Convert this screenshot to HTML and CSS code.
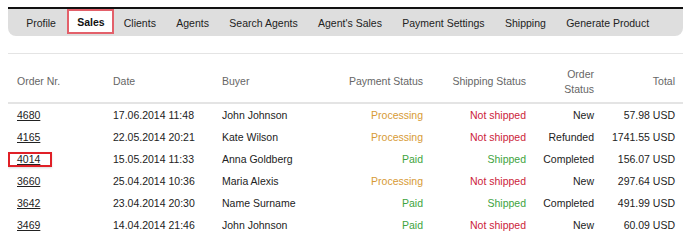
FILE: index.html
```html
<!DOCTYPE html>
<html lang="en">
<head>
    <meta charset="UTF-8">
    <title>Sales</title>
    <link rel="stylesheet" href="styles.css">
</head>
<body>
    <ul class="tabs">
        <li class="tab">Profile</li>
        <li class="tab active">Sales</li>
        <li class="tab">Clients</li>
        <li class="tab">Agents</li>
        <li class="tab">Search Agents</li>
        <li class="tab">Agent's Sales</li>
        <li class="tab">Payment Settings</li>
        <li class="tab">Shipping</li>
        <li class="tab">Generate Product</li>
    </ul>

    <div class="separator"></div>

    <table class="orders">
        <colgroup>
            <col class="c-order">
            <col class="c-date">
            <col class="c-buyer">
            <col class="c-pay">
            <col class="c-ship">
            <col class="c-status">
            <col class="c-total">
        </colgroup>
        <thead>
            <tr>
                <th>Order Nr.</th>
                <th>Date</th>
                <th>Buyer</th>
                <th class="right">Payment Status</th>
                <th class="right">Shipping Status</th>
                <th class="right">Order<br>Status</th>
                <th class="right">Total</th>
            </tr>
        </thead>
        <tbody>
            <tr>
                <td><a href="#">4680</a></td>
                <td>17.06.2014 11:48</td>
                <td>John Johnson</td>
                <td class="right processing">Processing</td>
                <td class="right not-shipped">Not shipped</td>
                <td class="right">New</td>
                <td class="right">57.98 USD</td>
            </tr>
            <tr>
                <td><a href="#">4165</a></td>
                <td>22.05.2014 20:21</td>
                <td>Kate Wilson</td>
                <td class="right processing">Processing</td>
                <td class="right not-shipped">Not shipped</td>
                <td class="right">Refunded</td>
                <td class="right">1741.55 USD</td>
            </tr>
            <tr>
                <td><span class="mark"><a href="#">4014</a></span></td>
                <td>15.05.2014 11:33</td>
                <td>Anna Goldberg</td>
                <td class="right paid">Paid</td>
                <td class="right shipped">Shipped</td>
                <td class="right">Completed</td>
                <td class="right">156.07 USD</td>
            </tr>
            <tr>
                <td><a href="#">3660</a></td>
                <td>25.04.2014 10:36</td>
                <td>Maria Alexis</td>
                <td class="right processing">Processing</td>
                <td class="right not-shipped">Not shipped</td>
                <td class="right">New</td>
                <td class="right">297.64 USD</td>
            </tr>
            <tr>
                <td><a href="#">3642</a></td>
                <td>23.04.2014 20:30</td>
                <td>Name Surname</td>
                <td class="right paid">Paid</td>
                <td class="right shipped">Shipped</td>
                <td class="right">Completed</td>
                <td class="right">491.99 USD</td>
            </tr>
            <tr>
                <td><a href="#">3469</a></td>
                <td>14.04.2014 21:46</td>
                <td>John Johnson</td>
                <td class="right paid">Paid</td>
                <td class="right not-shipped">Not shipped</td>
                <td class="right">New</td>
                <td class="right">60.09 USD</td>
            </tr>
        </tbody>
    </table>
</body>
</html>
```

FILE: styles.css
```css
body {
    font-family: "Liberation Sans", Arial, sans-serif;
    font-size: 10.5px;
    color: #222;
    background: #fff;
    margin: 7px 13px 0 8px;
}

.tabs {
    display: flex;
    align-items: stretch;
    list-style: none;
    margin: 0;
    padding: 0 8px;
    height: 27px;
    background: #dedede;
    border-top: 2px solid #111;
    border-radius: 0 0 8px 8px;
}

.tab {
    display: flex;
    align-items: center;
    padding: 0 10.2px;
}

.tab.active {
    font-weight: bold;
    background: #fff;
    border: 2px solid #e3606a;
    margin: 0 0 2px 1px;
    padding: 0 7px 0 8px;
    color: #111;
}

.separator {
    height: 1px;
    background: #e4e4e4;
    margin-top: 17px;
}

.orders {
    width: 100%;
    table-layout: fixed;
    border-collapse: collapse;
    margin-top: 4px;
}

.c-order { width: 96px; }
.c-date { width: 109px; }
.c-buyer { width: 117px; }
.c-pay { width: 101px; }
.c-ship { width: 103px; }
.c-status { width: 68px; }
.c-total { width: 81px; }

.orders th,
.orders td {
    padding: 0 8px 0 9px;
    text-align: left;
    white-space: nowrap;
}

.orders th {
    font-weight: normal;
    color: #666;
    height: 41px;
    padding-top: 3px;
    line-height: 15px;
    border-bottom: 2px solid #e4e4e4;
}

.orders td {
    height: 22px;
}

.orders .right {
    text-align: right;
}

.orders a {
    color: #222;
    text-decoration: underline;
}

.mark {
    display: inline-block;
    margin-left: -9px;
    padding: 0 10px 0 7px;
    line-height: 11px;
    border: 2px solid #e02027;
    box-shadow: 0 1px 2px rgba(0, 0, 0, 0.15);
}

.processing { color: #d79a35; }
.not-shipped { color: #cc1d3a; }
.paid,
.shipped { color: #3ea33e; }
```
